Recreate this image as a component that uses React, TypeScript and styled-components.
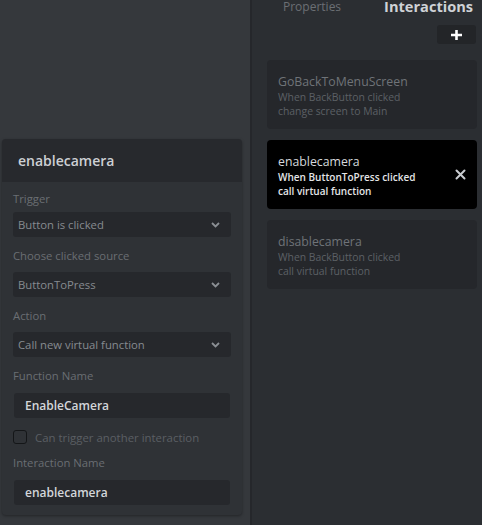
import styled, { createGlobalStyle } from "styled-components";

const GlobalStyle = createGlobalStyle`
  html, body {
    margin: 0;
    padding: 0;
    background: #35383c;
  }
  body {
    font-family: "Open Sans", "Noto Sans", sans-serif;
  }
  * {
    box-sizing: border-box;
  }
`;

const Layout = styled.div`
  display: flex;
  width: 482px;
  height: 525px;
  overflow: hidden;
`;

/* ---------- left: interaction editor ---------- */

const EditorPane = styled.div`
  width: 250px;
  flex-shrink: 0;
  background: #35383c;
  padding: 139px 8px 0 2px;
`;

const EditorCard = styled.div`
  width: 240px;
  border-radius: 4px;
  overflow: hidden;
  background: #2f3236;
  box-shadow: 0 1px 3px rgba(0, 0, 0, 0.35);
`;

const EditorHeader = styled.div`
  height: 43px;
  display: flex;
  align-items: center;
  padding-left: 16px;
  background: #27292d;
  color: #cdd0d4;
  font-size: 14px;
  font-weight: 600;
`;

const EditorBody = styled.div`
  display: flex;
  flex-direction: column;
  padding: 0 11px 10px;
`;

const Field = styled.div<{ $top: number }>`
  display: flex;
  flex-direction: column;
  margin-top: ${({ $top }) => $top}px;
`;

const FieldLabel = styled.label<{ $gap: number }>`
  font-size: 11.3px;
  line-height: 16px;
  color: #6a6e73;
  margin-bottom: ${({ $gap }) => $gap}px;
`;

const SelectBox = styled.div`
  height: 25px;
  display: flex;
  align-items: center;
  justify-content: space-between;
  padding: 0 11px 0 5px;
  border-radius: 3px;
  background: #26282c;
  color: #878b90;
  font-size: 11.3px;
`;

const TextBox = styled.div`
  height: 25px;
  margin: 0 1px;
  display: flex;
  align-items: center;
  padding-left: 11px;
  border-radius: 3px;
  background: #26282c;
  color: #d3d6da;
  font-size: 12px;
  font-weight: 600;
`;

const CheckRow = styled.label`
  display: flex;
  align-items: center;
  gap: 8px;
  margin-top: 12px;
  height: 14px;
  font-size: 11.4px;
  color: #5b5f64;
`;

const CheckBox = styled.span`
  width: 14px;
  height: 14px;
  border-radius: 3px;
  border: 1px solid #141618;
  background: #2f3236;
`;

/* ---------- right: interactions list ---------- */

const SidePane = styled.div`
  flex: 1;
  display: flex;
  flex-direction: column;
  background: #2b2e32;
  border-left: 2px solid #25272b;
`;

const TabRow = styled.div`
  display: flex;
  align-items: flex-start;
  height: 17px;
  padding-left: 31px;
  gap: 43px;
`;

const Tab = styled.div<{ $active?: boolean }>`
  font-size: ${({ $active }) => ($active ? "14.6px" : "12px")};
  line-height: ${({ $active }) => ($active ? "15px" : "14px")};
  font-weight: ${({ $active }) => ($active ? 700 : 400)};
  color: ${({ $active }) => ($active ? "#cfd2d6" : "#6b6f74")};
  margin-top: ${({ $active }) => ($active ? "-1px" : "0")};
  white-space: nowrap;
`;

const Toolbar = styled.div`
  display: flex;
  justify-content: flex-end;
  padding-right: 6px;
  margin-top: 8px;
`;

const AddButton = styled.button`
  width: 39px;
  height: 19px;
  border: none;
  border-radius: 3px;
  background: #232528;
  display: flex;
  align-items: center;
  justify-content: center;
  padding: 0;
`;

const CardList = styled.div`
  display: flex;
  flex-direction: column;
  gap: 11px;
  margin-top: 16px;
  padding: 0 5px 0 15px;
`;

const InteractionCard = styled.div<{ $active?: boolean }>`
  height: 69px;
  border-radius: 4px;
  padding: 14px 11px;
  display: flex;
  align-items: center;
  justify-content: space-between;
  background: ${({ $active }) => ($active ? "#000000" : "#25272b")};
`;

const CardText = styled.div`
  display: flex;
  flex-direction: column;
  align-self: flex-start;
`;

const CardTitle = styled.div<{ $active?: boolean }>`
  font-size: 12.3px;
  line-height: 16px;
  color: ${({ $active }) => ($active ? "#d6d9dd" : "#6f7378")};
`;

const CardLine = styled.div<{ $active?: boolean }>`
  font-size: ${({ $active }) => ($active ? "10px" : "10.4px")};
  line-height: 14px;
  font-weight: ${({ $active }) => ($active ? 600 : 400)};
  color: ${({ $active }) => ($active ? "#e4e5e7" : "#5c6065")};
`;

const Chevron = () => (
  <svg width="9" height="6" viewBox="0 0 9 6">
    <path d="M1 1l3.5 3.5L8 1" fill="none" stroke="#8a8e93" strokeWidth="1.8" />
  </svg>
);

const CloseIcon = () => (
  <svg width="11" height="11" viewBox="0 0 11 11">
    <path d="M1.5 1.5l8 8M9.5 1.5l-8 8" stroke="#c9ccd1" strokeWidth="2" strokeLinecap="round" />
  </svg>
);

const PlusIcon = () => (
  <svg width="11" height="10" viewBox="0 0 11 10">
    <path d="M5.5 0v10M0 5h11" stroke="#ffffff" strokeWidth="2.6" />
  </svg>
);

const interactions = [
  { name: "GoBackToMenuScreen", when: "When BackButton clicked", then: "change screen to Main" },
  { name: "enablecamera", when: "When ButtonToPress clicked", then: "call virtual function", active: true },
  { name: "disablecamera", when: "When BackButton clicked", then: "call virtual function" },
];

export default function App() {
  return (
    <>
      <GlobalStyle />
      <Layout>
        <EditorPane>
          <EditorCard>
            <EditorHeader>enablecamera</EditorHeader>
            <EditorBody>
              <Field $top={9}>
                <FieldLabel $gap={5}>Trigger</FieldLabel>
                <SelectBox>
                  Button is clicked
                  <Chevron />
                </SelectBox>
              </Field>
              <Field $top={11}>
                <FieldLabel $gap={8}>Choose clicked source</FieldLabel>
                <SelectBox>
                  ButtonToPress
                  <Chevron />
                </SelectBox>
              </Field>
              <Field $top={11}>
                <FieldLabel $gap={8}>Action</FieldLabel>
                <SelectBox>
                  Call new virtual function
                  <Chevron />
                </SelectBox>
              </Field>
              <Field $top={11}>
                <FieldLabel $gap={9}>Function Name</FieldLabel>
                <TextBox>EnableCamera</TextBox>
              </Field>
              <CheckRow>
                <CheckBox />
                Can trigger another interaction
              </CheckRow>
              <Field $top={11}>
                <FieldLabel $gap={9}>Interaction Name</FieldLabel>
                <TextBox>enablecamera</TextBox>
              </Field>
            </EditorBody>
          </EditorCard>
        </EditorPane>

        <SidePane>
          <TabRow>
            <Tab>Properties</Tab>
            <Tab $active>Interactions</Tab>
          </TabRow>
          <Toolbar>
            <AddButton>
              <PlusIcon />
            </AddButton>
          </Toolbar>
          <CardList>
            {interactions.map((item) => (
              <InteractionCard key={item.name} $active={item.active}>
                <CardText>
                  <CardTitle $active={item.active}>{item.name}</CardTitle>
                  <CardLine $active={item.active}>{item.when}</CardLine>
                  <CardLine $active={item.active}>{item.then}</CardLine>
                </CardText>
                {item.active && <CloseIcon />}
              </InteractionCard>
            ))}
          </CardList>
        </SidePane>
      </Layout>
    </>
  );
}
